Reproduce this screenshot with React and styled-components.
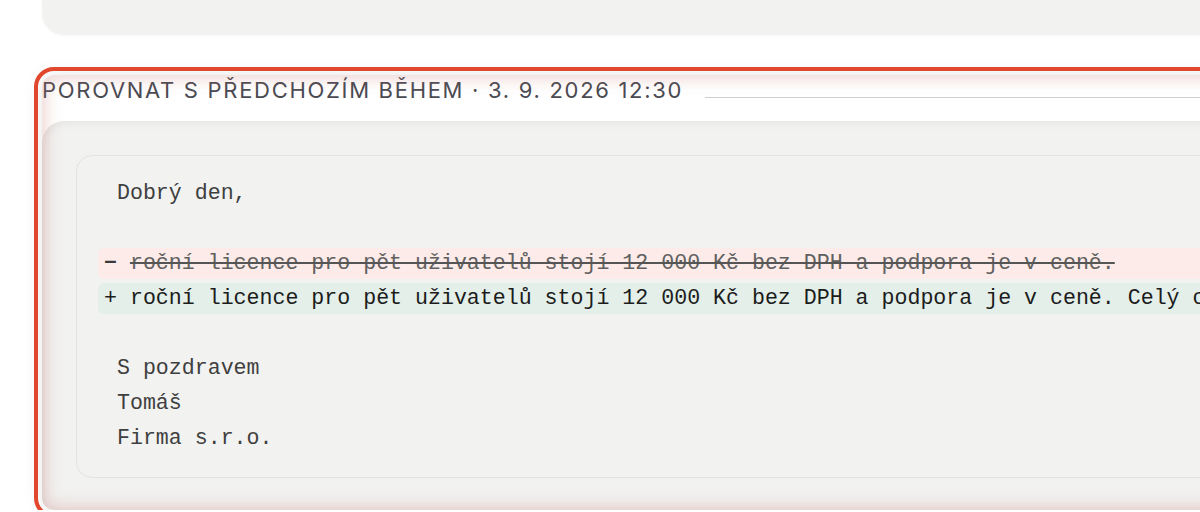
import React from 'react';
import styled, { createGlobalStyle } from 'styled-components';

const Global = createGlobalStyle`
  html, body {
    margin: 0;
    padding: 0;
    background: #ffffff;
    overflow: hidden;
  }
  body {
    font-family: Inter, "Noto Sans", sans-serif;
  }
`;

const Page = styled.div`
  width: 1400px;
  padding-left: 42px;
  display: flex;
  flex-direction: column;
`;

const TopCard = styled.div`
  flex: none;
  height: 35px;
  background: #f2f2f1;
  border-radius: 0 0 22px 22px;
  box-shadow: 0 1px 3px rgba(0, 0, 0, 0.03);
`;

const Section = styled.section`
  flex: none;
  position: relative;
  margin-top: 40px;
  height: 435px;
  border-radius: 12px;
  background: #ffffff;
  outline: 4px solid #e1472d;
  outline-offset: 4px;
  box-shadow: 0 0 20px rgba(0, 0, 0, 0.1);
  display: flex;
  flex-direction: column;
  overflow: hidden;

  &::after {
    content: "";
    position: absolute;
    inset: 0;
    border-radius: inherit;
    pointer-events: none;
    box-shadow: inset 0 0 16px 4px rgba(195, 120, 110, 0.3);
  }
`;

const Header = styled.header`
  flex: none;
  height: 46px;
  padding-top: 2px;
  box-sizing: border-box;
  display: flex;
  align-items: flex-start;
  gap: 22px;
`;

const Title = styled.h2`
  margin: 0;
  font-size: 22px;
  line-height: 26px;
  font-weight: 400;
  letter-spacing: 1.7px;
  text-transform: uppercase;
  color: #4a4a52;
  white-space: nowrap;
`;

const Rule = styled.div`
  flex: 1;
  height: 1px;
  margin-top: 20px;
  background: #d0d0d0;
`;

const Panel = styled.div`
  flex: 1;
  background: #f2f2f1;
  border-radius: 22px 0 0 0;
  padding: 34px 0 0 34px;
  box-shadow: inset 2px 3px 8px rgba(0, 0, 0, 0.05);
`;

const CodeBox = styled.pre`
  margin: 0;
  width: 1320px;
  box-sizing: border-box;
  border: 1px solid #e2e2df;
  border-radius: 16px;
  background: #f2f2f0;
  padding: 20px 0 21px 21px;
  display: flex;
  flex-direction: column;
  font-family: "Liberation Mono", "DejaVu Sans Mono", monospace;
  font-size: 21.6px;
`;

const Line = styled.div`
  margin: 2px 0;
  padding-left: 6px;
  height: 31px;
  line-height: 31px;
  white-space: pre;
  border-radius: 6px;
  color: ${(p) => (p.$kind === 'add' ? '#1c1c1c' : '#3f3f3f')};
  background: ${(p) =>
    p.$kind === 'del' ? '#fcebe8' : p.$kind === 'add' ? '#e3efe8' : 'transparent'};
`;

const Sign = styled.span`
  font-weight: ${(p) => (p.$bold ? 700 : 400)};
  color: ${(p) => (p.$bold ? '#3a3a3a' : '#1c1c1c')};
`;

const Removed = styled.span`
  color: #606060;
  text-decoration: line-through;
  text-decoration-color: #555;
  text-decoration-thickness: 2px;
`;

const lines = [
  { kind: 'ctx', text: 'Dobrý den,' },
  { kind: 'ctx', text: '' },
  { kind: 'del', text: 'roční licence pro pět uživatelů stojí 12 000 Kč bez DPH a podpora je v ceně.' },
  { kind: 'add', text: 'roční licence pro pět uživatelů stojí 12 000 Kč bez DPH a podpora je v ceně. Celý ceník najdete v příloze.' },
  { kind: 'ctx', text: '' },
  { kind: 'ctx', text: 'S pozdravem' },
  { kind: 'ctx', text: 'Tomáš' },
  { kind: 'ctx', text: 'Firma s.r.o.' },
];

export default function App() {
  return (
    <>
      <Global />
      <Page>
        <TopCard />
        <Section>
          <Header>
            <Title>Porovnat s předchozím během · 3. 9. 2026 12:30</Title>
            <Rule />
          </Header>
          <Panel>
            <CodeBox>
              {lines.map((l, i) => (
                <Line key={i} $kind={l.kind}>
                  {l.kind === 'del' ? (
                    <>
                      <Sign $bold>{'− '}</Sign>
                      <Removed>{l.text}</Removed>
                    </>
                  ) : l.kind === 'add' ? (
                    <>
                      <Sign>{'+ '}</Sign>
                      {l.text}
                    </>
                  ) : (
                    ' ' + l.text
                  )}
                </Line>
              ))}
            </CodeBox>
          </Panel>
        </Section>
      </Page>
    </>
  );
}
